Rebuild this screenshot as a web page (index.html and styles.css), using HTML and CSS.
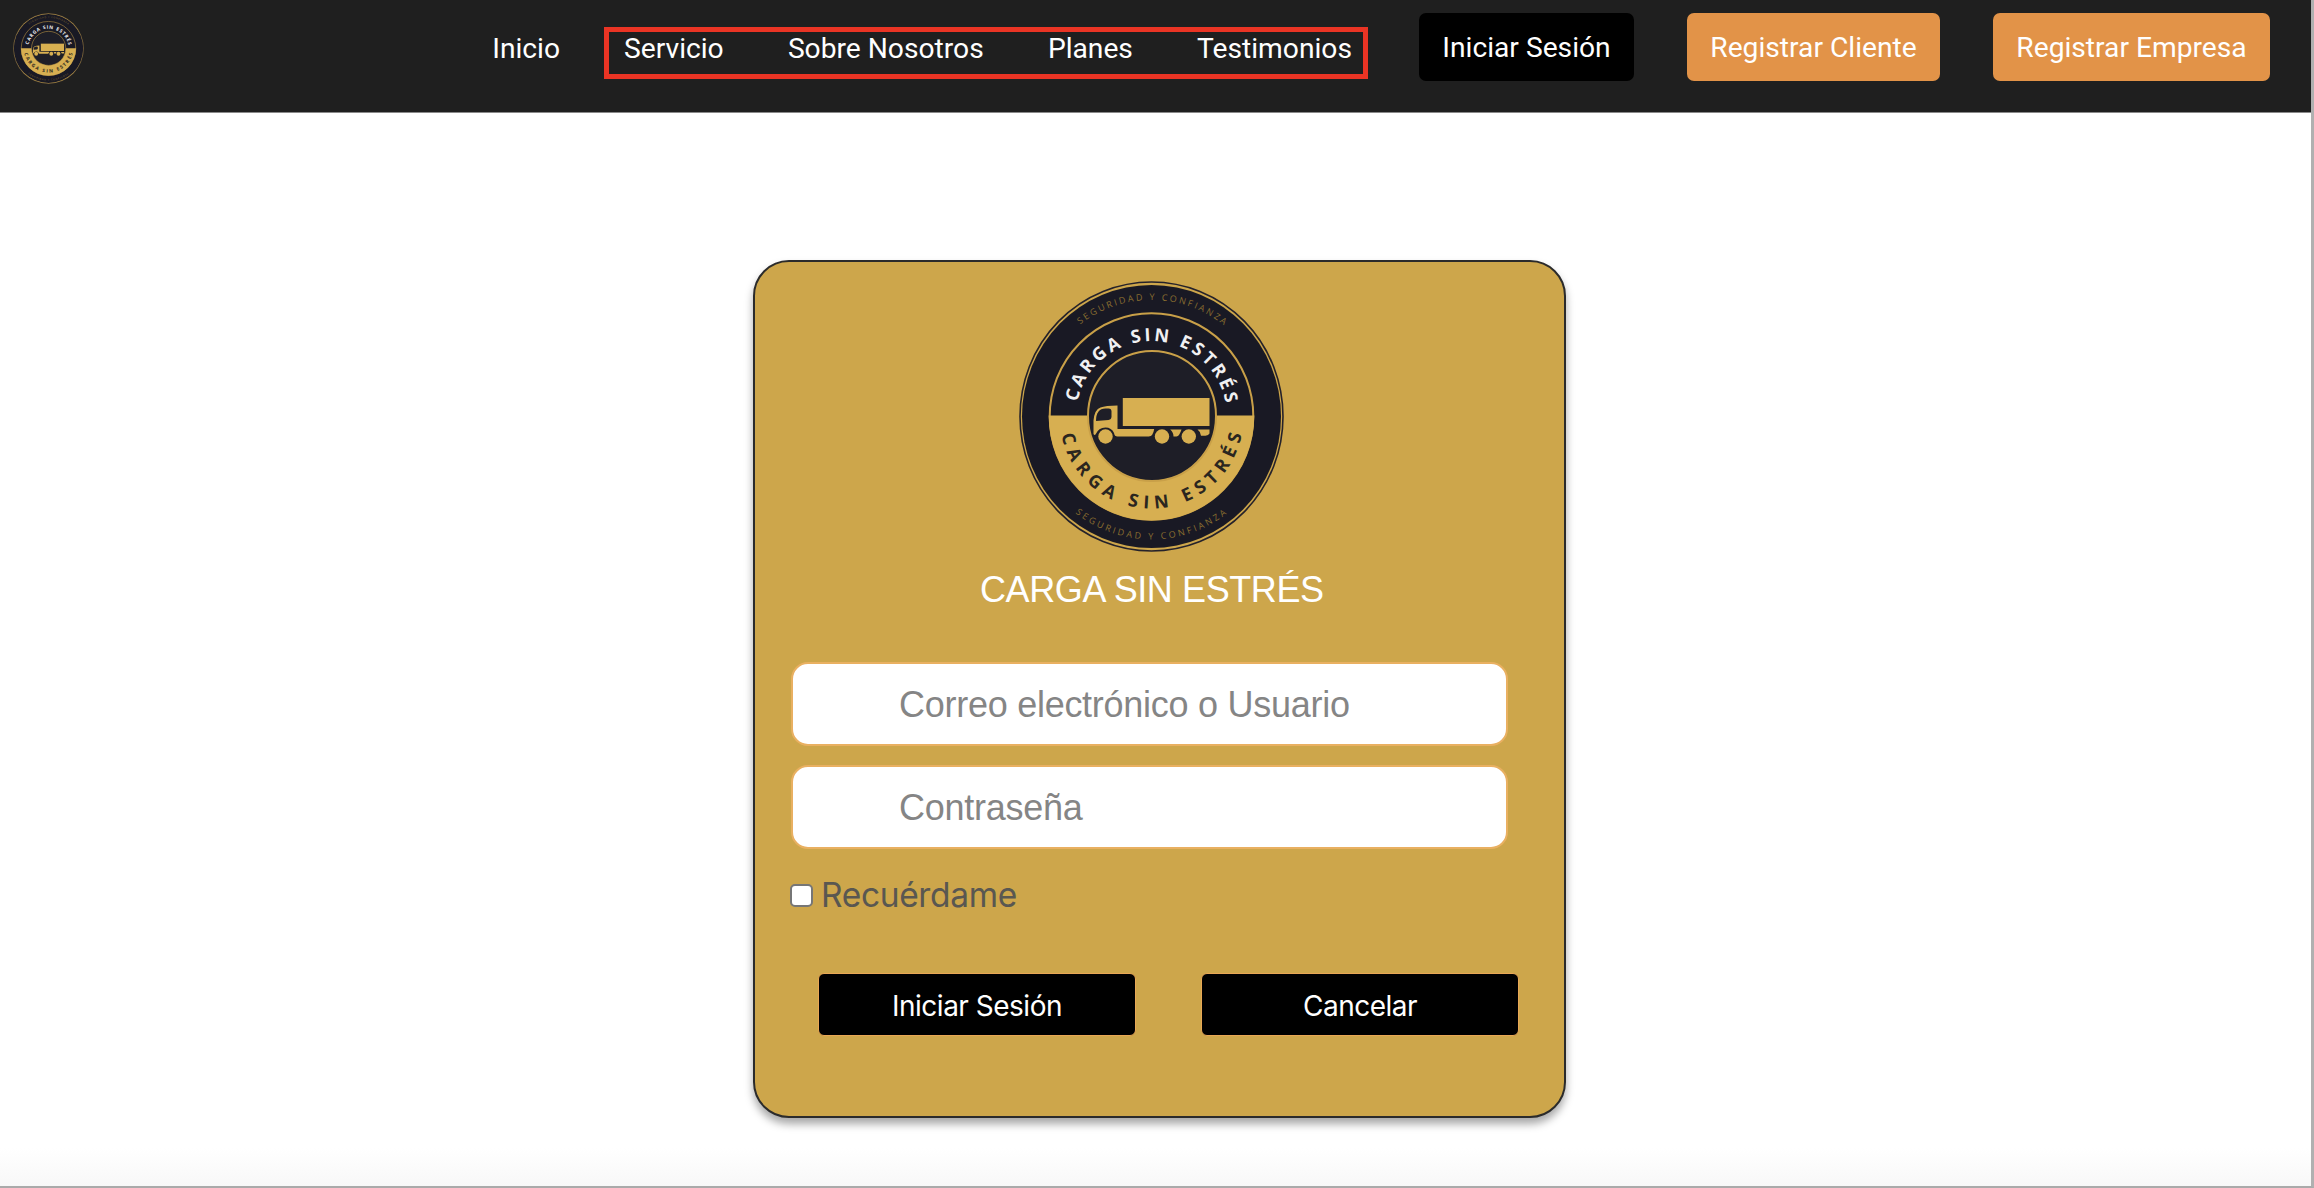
FILE: index.html
```html
<!DOCTYPE html>
<html lang="es">
<head>
<meta charset="utf-8">
<title>Carga Sin Estrés</title>
<link rel="stylesheet" href="styles.css">
</head>
<body>
<div class="page">
  <header class="navbar">
    <svg class="brand" viewBox="-132.500 -135.5 265 271" preserveAspectRatio="none"><use href="#logo"/></svg>
    <nav class="menu">
      <a class="link home">Inicio</a>
      <div class="group">
        <a class="link servicio">Servicio</a>
        <a class="link nosotros">Sobre Nosotros</a>
        <a class="link planes">Planes</a>
        <a class="link testimonios">Testimonios</a>
      </div>
      <a class="nav-btn dark"><span>Iniciar Sesión</span></a>
      <a class="nav-btn cliente"><span>Registrar Cliente</span></a>
      <a class="nav-btn empresa"><span>Registrar Empresa</span></a>
    </nav>
  </header>
  <main class="content">
    <form class="card">
      <svg class="logo" viewBox="-132.500 -135.5 265 271">
        <defs>
          <path id="arc-top" d="M-75.500 0A75.500 75.500 0 0 1 75.500 0"/>
          <path id="arc-bottom" d="M-92 0A92 92 0 0 0 92 0"/>
          <path id="arc-top-small" d="M-116.500 0A116.500 116.500 0 0 1 116.500 0"/>
          <path id="arc-bottom-small" d="M-123 0A123 123 0 0 0 123 0"/>
        </defs>
        <g id="logo">
          <ellipse rx="131.500" ry="134.500" fill="#cda64b" stroke="#25222a" stroke-width="1.600"/>
          <ellipse rx="129.500" ry="131.500" fill="#191924"/>
          <ellipse rx="101.800" ry="103.300" fill="#191924" stroke="#c9a048" stroke-width="2"/>
          <path d="M-102.800-1H102.800A102.800 105 0 0 1-102.800-1Z" fill="#d7af51"/>
          <ellipse cx=".5" cy="-.5" rx="64" ry="65" fill="#1e1e27" stroke="#c9a048" stroke-width="2"/>
          <g fill="#d7af51">
            <path d="M-28.700-18.500H58V9.500H-28.700Z"/>
            <path d="M-34-11V12.500H2.700Q1.500 20-2.700 20H-34Q-37 20-37.500 16.500Q-40 11-46 11Q-53 11-56 18Q-57 19-58 17.500V4Q-57-7-51-9Q-46-11-34-11Z"/>
            <circle cx="-46" cy="20" r="7.200"/>
            <circle cx="10.500" cy="20" r="7.200"/>
            <circle cx="37.300" cy="20" r="7.200"/>
            <path d="M18.700 13H30Q28 19.500 25 20H22Q22 16 18.700 13Z"/>
            <path d="M46 13H58V17Q57 19 54 19.300H49.500Q49 15 46 13Z"/>
          </g>
          <path d="M-55.500 4.500Q-55.500-8-46-8H-43Q-40-8-40-5V0Q-40 3-43 3.500Z" fill="#1e1e27"/>
          <g class="ring-text">
            <text class="big light"><textPath href="#arc-top" startOffset="14.500" textLength="209" lengthAdjust="spacing">CARGA SIN ESTRÉS</textPath></text>
            <text class="big deep"><textPath href="#arc-bottom" startOffset="18.500" textLength="252" lengthAdjust="spacing">CARGA SIN ESTRÉS</textPath></text>
            <text class="small"><textPath href="#arc-top-small" startOffset="106" textLength="155" lengthAdjust="spacing">SEGURIDAD Y CONFIANZA</textPath></text>
            <text class="small"><textPath href="#arc-bottom-small" startOffset="111" textLength="163" lengthAdjust="spacing">SEGURIDAD Y CONFIANZA</textPath></text>
          </g>
        </g>
      </svg>
      <h1 class="title">CARGA SIN ESTRÉS</h1>
      <input class="field" type="text" placeholder="Correo electrónico o Usuario">
      <input class="field" type="password" placeholder="Contraseña">
      <label class="remember"><input class="check" type="checkbox"><span>Recuérdame</span></label>
      <div class="actions">
        <button class="action" type="button">Iniciar Sesión</button>
        <button class="action" type="button">Cancelar</button>
      </div>
    </form>
  </main>
</div>
</body>
</html>
```
FILE: styles.css
```css
* { box-sizing: border-box; }
body {
  margin: 0;
  font-family: Roboto, "Liberation Sans", sans-serif;
  background: #fff;
}
.page {
  width: 2314px;
  height: 1188px;
  display: flex;
  flex-direction: column;
  border-right: 3px solid #b0b0b0;
  border-bottom: 2px solid #aaa;
  overflow: hidden;
  background: linear-gradient(#fff 1148px, #f8f8f8 1186px);
}
.navbar {
  height: 113px;
  flex: none;
  display: flex;
  align-items: flex-start;
  justify-content: space-between;
  padding: 13px 41px 0 13px;
  background: #1f1f1f;
  border-bottom: 1px solid #8a8a8a;
}
.brand { width: 71px; height: 71px; }
.menu { display: flex; align-items: flex-start; color: #fff; font-size: 28.2px; white-space: nowrap; }
.link { line-height: 33px; }
.home { margin: 19px 44px 0 0; }
.group {
  width: 764px;
  height: 52px;
  margin: 14px 51px 0 0;
  padding: 0 11px 0 15px;
  border: 5px solid #ea3424;
  display: flex;
  justify-content: space-between;
}
.nav-btn {
  height: 68px;
  margin-right: 53px;
  padding-top: 18px;
  border-radius: 7px;
  line-height: 33px;
  text-align: center;
  background: #e29348;
}
.dark { width: 215px; background: #000; }
.cliente { width: 253px; }
.empresa { width: 277px; margin-right: 0; }
.content { display: flex; justify-content: flex-start; padding: 147px 0 0 753px; }
.card {
  width: 813px;
  height: 858px;
  display: flex;
  flex-direction: column;
  align-items: flex-start;
  padding: 19px 36px 0 38px;
  border: 2px solid #2b2b2b;
  border-radius: 36px;
  background: #cda64b;
  box-shadow: 0 6px 9px rgba(0, 0, 0, .35);
}
.logo { width: 265px; height: 271px; margin-left: 226px; }
.ring-text { font-family: "Open Sans", sans-serif; }
.big { font-size: 18px; font-weight: 700; }
.light { fill: #f0f0f2; }
.deep { fill: #2b261f; }
.small { font-size: 9px; font-weight: 400; fill: #8a6e30; }
.title {
  margin: 17px 0 0 187px;
  font: 400 36px/42px "Liberation Sans", Arial, sans-serif;
  letter-spacing: -.4px;
  color: #fff;
  white-space: nowrap;
}
.field {
  width: 717px;
  height: 84px;
  margin: 0 0 19px -2px;
  padding: 1px 0 0 106px;
  border: 2px solid #e9b061;
  border-radius: 17px;
  background: #fff;
  font: 36px "Liberation Sans", Arial, sans-serif;
  letter-spacing: -.27px;
}
.title + .field { margin-top: 51px; }
.field::placeholder { color: #858585; opacity: 1; }
.remember {
  display: flex;
  align-items: center;
  gap: 8px;
  height: 42px;
  margin: 6px 0 0 -3px;
  font: 33.5px Inter, Roboto, sans-serif;
  letter-spacing: -.35px;
  color: #595751;
}
.check {
  appearance: none;
  width: 23px;
  height: 23px;
  margin: 0;
  border: 2px solid #767676;
  border-radius: 5px;
  background: #fff;
}
.actions { display: flex; gap: 65px; margin: 57px 0 0 25px; }
.action {
  width: 318px;
  height: 63px;
  padding: 2px 0 0;
  border: 1px solid #e9a755;
  border-radius: 6px;
  background: #000;
  color: #fff;
  font: 28px Inter, Roboto, sans-serif;
  letter-spacing: -.5px;
}
```
